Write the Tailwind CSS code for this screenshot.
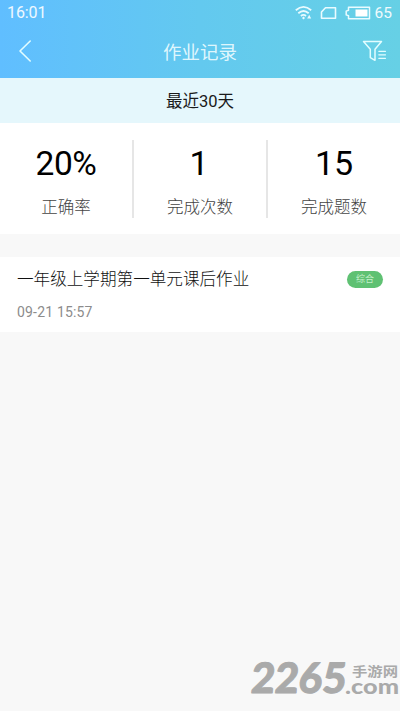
<!DOCTYPE html>
<html lang="zh-CN">
<head>
<meta charset="utf-8">
<title>作业记录</title>
<script src="https://cdn.jsdelivr.net/npm/@tailwindcss/browser@4"></script>
</head>
<body class="bg-[#f8f8f8]">
<main class="relative flex h-[711px] w-[400px] flex-col overflow-hidden font-[Roboto,'Noto_Sans_CJK_SC',sans-serif]">
  <header class="h-[78px] shrink-0 bg-linear-to-r from-[#60beff] via-[#63c9ef] to-[#66d0e5] text-white">
    <div class="flex h-[25px] items-center justify-between pl-[7px] pr-[8px] text-[16px] leading-[25px]">
      <span class="tracking-[-0.1px] text-white/90">16:01</span>
      <div class="flex items-center">
        <svg class="mr-[6px]" width="19" height="16" viewBox="0 0 19 16" fill="none" stroke="#e9fbff" stroke-width="1.8"><path d="M.8 5.200Q8.500 -1.500 16.200 5.200M3.300 8.200Q8.500 3.700 13.700 8.200M5.900 11Q8.500 8.800 11 11"/><path d="M8.500 11.500l1.500 1.500-1.500 1.500-1.500-1.500z" fill="#e9fbff" stroke="none"/><path d="M14.200 9.800l2 3.800h-4z" fill="#e9fbff" stroke="none"/></svg>
        <svg class="mr-[8px]" width="17" height="14" viewBox="0 0 17 14" fill="none" stroke="#e9fbff" stroke-width="1.600" stroke-linejoin="round"><path d="M5.500 1.800H15.500V12.200H1.500V6Z"/></svg>
        <svg class="mr-[4px]" width="26" height="14" viewBox="0 0 26 14" fill="none" stroke="#e9fbff" stroke-width="1.500" stroke-linejoin="round"><path d="M3.500 1.300H24.500V12.700H3.500V9.800L1.200 8.900V5.100L3.500 4.200Z"/><path d="M10.500 3.500H22.500V10.500H10.500Z" fill="#fff" stroke="none"/></svg>
        <span class="relative top-px text-[15.500px] text-white/90">65</span>
      </div>
    </div>
    <div class="grid h-[53px] grid-cols-[1fr_auto_1fr] items-center pl-[18px] pr-[13px]">
      <svg class="-mt-[2px]" width="15" height="24" viewBox="0 0 15 24" fill="none" stroke="#e2fdff" stroke-width="1.600" stroke-linecap="round" stroke-linejoin="round"><path d="M12.200 2L2 12L12.200 22"/></svg>
      <h1 class="ml-[-5px] pt-[2px] text-[18.500px] leading-[26px] text-[#f0fdff]/90">作业记录</h1>
      <svg class="-mt-[2px] justify-self-end" width="25" height="22" viewBox="0 0 25 22" fill="none" stroke="#e2fdff" stroke-width="1.500" stroke-linejoin="round" stroke-linecap="round"><path d="M1.500 1.500H19.500L13 9.200V20.300L8.300 17.600V9.200Z"/><path d="M16.800 11.300H23.500M16.800 14.800H23.500M16.800 18.300H23.500" stroke-width="1.200"/></svg>
    </div>
  </header>
  <div class="flex h-[45px] shrink-0 items-center justify-center bg-[#e5f7fc] pt-[3px] text-[16.500px] text-[#1a1a1a]">最近30天</div>
  <section class="grid h-[111px] shrink-0 grid-cols-[132px_2px_132px_2px_132px] bg-white pt-[17px] text-center">
    <div class="flex flex-col items-center">
      <span class="mt-[4px] text-[33.500px] leading-[40px] tracking-[-0.4px] text-black">20%</span>
      <span class="mt-[11px] text-[16.500px] font-light leading-[25px] text-[#444]">正确率</span>
    </div>
    <div class="h-[78px] bg-[#e6e6e6]"></div>
    <div class="flex flex-col items-center">
      <span class="mt-[3px] pr-[2px] text-[34px] leading-[40px] text-black">1</span>
      <span class="mt-[12px] text-[16.500px] font-light leading-[25px] text-[#444]">完成次数</span>
    </div>
    <div class="h-[78px] bg-[#e6e6e6]"></div>
    <div class="flex flex-col items-center">
      <span class="mt-[3px] text-[34px] leading-[40px] text-black">15</span>
      <span class="mt-[12px] text-[16.500px] font-light leading-[25px] text-[#444]">完成题数</span>
    </div>
  </section>
  <article class="mt-[23px] h-[75px] shrink-0 bg-white pl-[17px] pr-[17px] pt-[11px]">
    <div class="flex items-center justify-between">
      <h2 class="text-[16.600px] font-light leading-[24px] text-[#111]">一年级上学期第一单元课后作业</h2>
      <span class="mb-[2px] flex h-[17px] w-[36px] items-center justify-center rounded-full bg-[#5fc173] pt-px text-[9px] leading-none text-[#c5f0cb]">综合</span>
    </div>
    <time class="mt-[10px] block text-[14px] leading-[20px] tracking-[0.18px] text-[#8c8c8c]">09-21 15:57</time>
  </article>
  <svg class="absolute bottom-0 right-0" width="160" height="61" viewBox="0 0 160 61" fill="#aaa" aria-label="2265.com">
    <text x="10" y="43" font-family="Lato, sans-serif" font-weight="900" font-size="42" textLength="95" lengthAdjust="spacingAndGlyphs" transform="translate(4 0) skewX(-5)" stroke="#aaa" stroke-width="1" stroke-linejoin="round">2265</text>
    <text x="105" y="43.500" font-family="Lato, sans-serif" font-weight="900" font-size="21" textLength="54" lengthAdjust="spacingAndGlyphs">.com</text>
    <text x="112" y="25.500" font-family="'Noto Sans CJK SC', sans-serif" font-weight="700" font-size="13" textLength="46" lengthAdjust="spacingAndGlyphs">手游网</text>
  </svg>
</main>
</body>
</html>
